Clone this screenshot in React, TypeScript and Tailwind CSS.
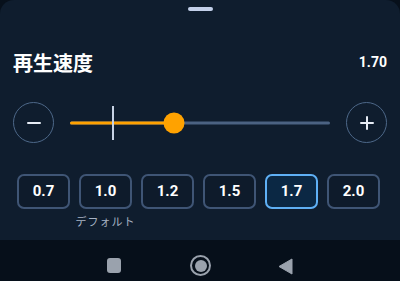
import React from "react";

export default function App() {
  const speeds = ["0.7", "1.0", "1.2", "1.5", "1.7", "2.0"];
  const selected = "1.7";
  const thumbPct = 40;
  const defPct = 16.5;
  return (
    <div
      className="w-[400px] h-[281px] bg-[#07101b] flex flex-col overflow-hidden"
      style={{ fontFamily: 'Roboto, "Noto Sans CJK JP", sans-serif' }}
    >
      <div className="h-[240px] bg-[#0f1d2e] rounded-t-[14px] flex flex-col">
        <div className="flex justify-center pt-[7px]">
          <div className="w-[25px] h-[4px] rounded-full bg-[#c3d0ea]" />
        </div>
        <div className="flex justify-between items-start px-[13px] mt-[39px]">
          <div className="text-[20px] leading-[26px] font-bold text-white" style={{ fontFamily: '"Noto Sans CJK JP", sans-serif' }}>
            再生速度
          </div>
          <div className="text-[14px] leading-[18px] font-bold text-white mt-[3px]">1.70</div>
        </div>
        <div className="flex items-center px-[13px] mt-[26px] h-[41px]">
          <button className="w-[41px] h-[41px] rounded-full border-[1.5px] border-[#4d6889] flex items-center justify-center shrink-0">
            <div className="w-[14px] h-[2px] bg-[#e6ecf5] rounded" />
          </button>
          <div className="relative flex-1 mx-[16px] h-[41px]">
            <div className="absolute left-0 right-0 top-1/2 -translate-y-1/2 h-[3px] rounded-full bg-[#4b6282]" />
            <div
              className="absolute left-0 top-1/2 -translate-y-1/2 h-[3px] rounded-full bg-[#ffa200]"
              style={{ width: `${thumbPct}%` }}
            />
            <div
              className="absolute top-[4px] w-[2px] h-[34px] bg-[#c6d2e4] -translate-x-1/2"
              style={{ left: `${defPct}%` }}
            />
            <div
              className="absolute top-1/2 -translate-y-1/2 -translate-x-1/2 w-[21px] h-[21px] rounded-full bg-[#ffa200]"
              style={{ left: `${thumbPct}%` }}
            />
          </div>
          <button className="w-[41px] h-[41px] rounded-full border-[1.5px] border-[#4d6889] flex items-center justify-center shrink-0 relative">
            <div className="absolute w-[14px] h-[2px] bg-[#e6ecf5] rounded" />
            <div className="absolute w-[2px] h-[14px] bg-[#e6ecf5] rounded" />
          </button>
        </div>
        <div className="flex px-[17px] gap-[9px] mt-[31px]">
          {speeds.map((s) => {
            const sel = s === selected;
            return (
              <div key={s} className="flex flex-col items-center w-[53px]">
                <div
                  className={
                    "w-[53px] h-[35px] rounded-[7px] border-2 flex items-center justify-center text-[15px] font-bold text-white " +
                    (sel ? "border-[#5fb0f5] bg-[#0b2844]" : "border-[#3f5575] bg-[#0e1b2b]")
                  }
                >
                  {s}
                </div>
                {s === "1.0" && (
                  <div
                    className="mt-[5px] text-[11px] leading-[14px] text-[#a7b3c4] tracking-[1px] whitespace-nowrap"
                    style={{ fontFamily: '"Noto Sans CJK JP", sans-serif' }}
                  >
                    デフォルト
                  </div>
                )}
              </div>
            );
          })}
        </div>
      </div>
      <div className="flex-1 bg-[#060f1a] relative">
        <div className="absolute left-[107px] top-[18px] w-[14px] h-[15px] rounded-[3px] bg-[#9aa2ad]" />
        <div className="absolute left-[190px] top-[15px] w-[21px] h-[21px] rounded-full border-[2px] border-[#9aa2ad] flex items-center justify-center">
          <div className="w-[12px] h-[12px] rounded-full bg-[#9aa2ad]" />
        </div>
        <svg className="absolute left-[278px] top-[18px]" width="15" height="17" viewBox="0 0 15 17">
          <path d="M14 1 L1 8.5 L14 16 Z" fill="#9aa2ad" stroke="#9aa2ad" strokeLinejoin="round" strokeWidth="1" />
        </svg>
      </div>
    </div>
  );
}
